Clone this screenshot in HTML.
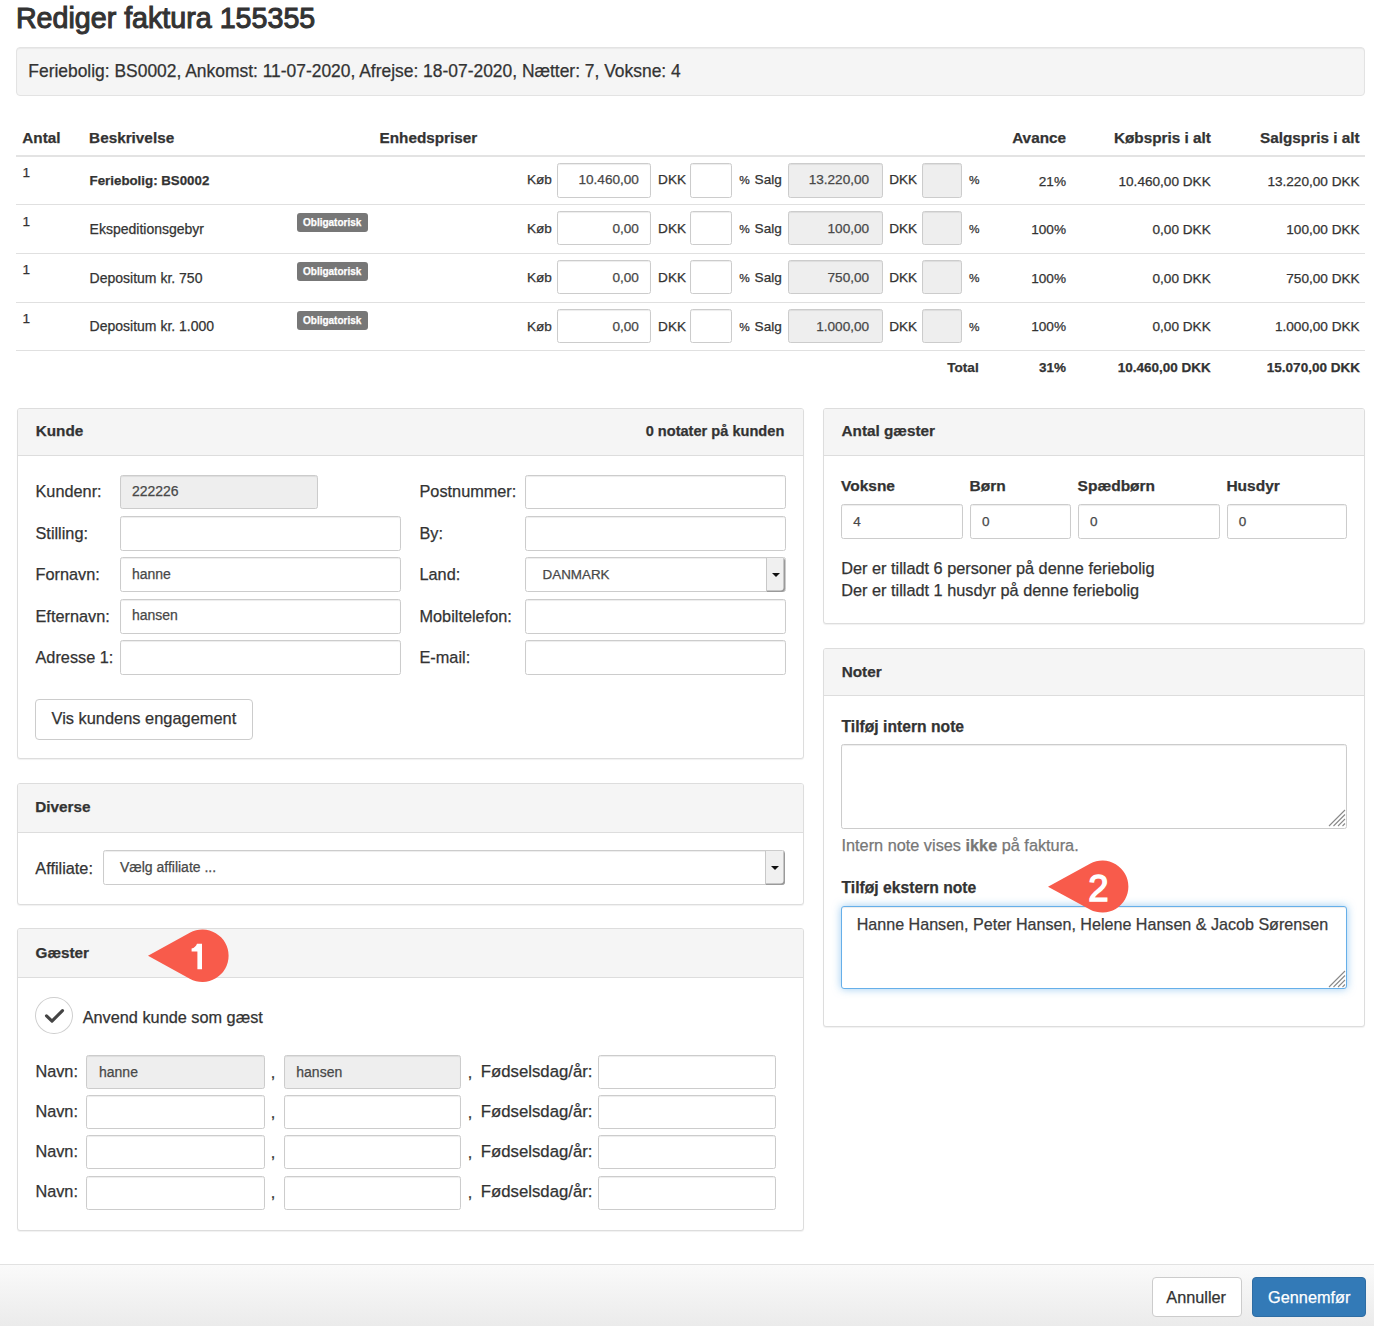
<!DOCTYPE html>
<html><head><meta charset="utf-8"><title>Rediger faktura</title>
<style>
html,body{margin:0;padding:0;background:#fff;}
body{width:1374px;height:1326px;position:relative;overflow:hidden;font-family:"Liberation Sans", sans-serif;}
.t{position:absolute;white-space:pre;line-height:1;-webkit-text-stroke:0.25px currentColor;}
.b{position:absolute;}
</style></head><body>
<div class="t" style="left:15.90px;top:4px;font-size:28.65px;color:#333;-webkit-text-stroke:1.05px #333;">Rediger faktura 155355</div>
<div class="b" style="left:16.00px;top:47.00px;width:1349.00px;height:48.50px;background:#f5f5f5;border:1px solid #e3e3e3;border-radius:4px;box-sizing:border-box;box-shadow:inset 0 1px 1px rgba(0,0,0,.05);"></div>
<div class="t" style="left:28.30px;top:63px;font-size:17.43px;color:#333;">Feriebolig: BS0002, Ankomst: 11-07-2020, Afrejse: 18-07-2020, Nætter: 7, Voksne: 4</div>
<div class="t" style="left:22.30px;top:130px;font-size:15.3px;font-weight:bold;color:#333;">Antal</div>
<div class="t" style="left:89.10px;top:130px;font-size:15.3px;font-weight:bold;color:#333;">Beskrivelse</div>
<div class="t" style="left:379.50px;top:130px;font-size:15.3px;font-weight:bold;color:#333;">Enhedspriser</div>
<div class="t" style="right:308.00px;top:130px;font-size:15.3px;font-weight:bold;color:#333;">Avance</div>
<div class="t" style="right:163.20px;top:130px;font-size:15.3px;font-weight:bold;color:#333;">Købspris i alt</div>
<div class="t" style="right:14.50px;top:130px;font-size:15.3px;font-weight:bold;color:#333;">Salgspris i alt</div>
<div class="b" style="left:16.00px;top:154.80px;width:1349.00px;height:2.00px;background:#e3e3e3;"></div>
<div class="t" style="left:22.60px;top:166px;font-size:13.6px;color:#333;">1</div>
<div class="t" style="left:89.60px;top:174px;font-size:13.3px;font-weight:bold;color:#333;">Feriebolig: BS0002</div>
<div class="t" style="left:527.00px;top:173px;font-size:13.6px;color:#333;">Køb</div>
<div class="b" style="left:557.30px;top:163.00px;width:94.00px;height:34.50px;background:#fff;border:1px solid #ccc;border-radius:2.5px;box-sizing:border-box;box-shadow:inset 0 1px 1px rgba(0,0,0,.075);"></div>
<div class="t" style="right:735.10px;top:173px;font-size:13.6px;color:#484848;">10.460,00</div>
<div class="t" style="left:658.10px;top:173px;font-size:13.6px;color:#333;">DKK</div>
<div class="b" style="left:690.40px;top:163.00px;width:41.90px;height:34.50px;background:#fff;border:1px solid #ccc;border-radius:2.5px;box-sizing:border-box;box-shadow:inset 0 1px 1px rgba(0,0,0,.075);"></div>
<div class="t" style="left:739.20px;top:175px;font-size:11.8px;color:#333;">%</div>
<div class="t" style="left:754.60px;top:173px;font-size:13.6px;color:#333;">Salg</div>
<div class="b" style="left:788.40px;top:163.00px;width:94.30px;height:34.50px;background:#eee;border:1px solid #ccc;border-radius:2.5px;box-sizing:border-box;box-shadow:inset 0 1px 1px rgba(0,0,0,.075);"></div>
<div class="t" style="right:504.90px;top:173px;font-size:13.6px;color:#484848;">13.220,00</div>
<div class="t" style="left:889.20px;top:173px;font-size:13.6px;color:#333;">DKK</div>
<div class="b" style="left:922.20px;top:163.00px;width:40.10px;height:34.50px;background:#eee;border:1px solid #ccc;border-radius:2.5px;box-sizing:border-box;box-shadow:inset 0 1px 1px rgba(0,0,0,.075);"></div>
<div class="t" style="left:969.10px;top:175px;font-size:11.8px;color:#333;">%</div>
<div class="t" style="right:308.00px;top:175px;font-size:13.6px;color:#333;">21%</div>
<div class="t" style="right:163.30px;top:175px;font-size:13.6px;color:#333;">10.460,00 DKK</div>
<div class="t" style="right:14.40px;top:175px;font-size:13.6px;color:#333;">13.220,00 DKK</div>
<div class="b" style="left:16.00px;top:203.90px;width:1349.00px;height:1.00px;background:#e0e0e0;"></div>
<div class="t" style="left:22.60px;top:215px;font-size:13.6px;color:#333;">1</div>
<div class="t" style="left:89.60px;top:222px;font-size:14px;color:#333;">Ekspeditionsgebyr</div>
<div class="b" style="left:296.60px;top:213.20px;width:71.20px;height:18.50px;background:#777;border-radius:3px;"></div>
<div class="t" style="left:132.20px;width:400px;text-align:center;top:218px;font-size:10px;font-weight:bold;color:#fff;">Obligatorisk</div>
<div class="t" style="left:527.00px;top:222px;font-size:13.6px;color:#333;">Køb</div>
<div class="b" style="left:557.30px;top:210.80px;width:94.00px;height:34.50px;background:#fff;border:1px solid #ccc;border-radius:2.5px;box-sizing:border-box;box-shadow:inset 0 1px 1px rgba(0,0,0,.075);"></div>
<div class="t" style="right:735.10px;top:222px;font-size:13.6px;color:#484848;">0,00</div>
<div class="t" style="left:658.10px;top:222px;font-size:13.6px;color:#333;">DKK</div>
<div class="b" style="left:690.40px;top:210.80px;width:41.90px;height:34.50px;background:#fff;border:1px solid #ccc;border-radius:2.5px;box-sizing:border-box;box-shadow:inset 0 1px 1px rgba(0,0,0,.075);"></div>
<div class="t" style="left:739.20px;top:224px;font-size:11.8px;color:#333;">%</div>
<div class="t" style="left:754.60px;top:222px;font-size:13.6px;color:#333;">Salg</div>
<div class="b" style="left:788.40px;top:210.80px;width:94.30px;height:34.50px;background:#eee;border:1px solid #ccc;border-radius:2.5px;box-sizing:border-box;box-shadow:inset 0 1px 1px rgba(0,0,0,.075);"></div>
<div class="t" style="right:504.90px;top:222px;font-size:13.6px;color:#484848;">100,00</div>
<div class="t" style="left:889.20px;top:222px;font-size:13.6px;color:#333;">DKK</div>
<div class="b" style="left:922.20px;top:210.80px;width:40.10px;height:34.50px;background:#eee;border:1px solid #ccc;border-radius:2.5px;box-sizing:border-box;box-shadow:inset 0 1px 1px rgba(0,0,0,.075);"></div>
<div class="t" style="left:969.10px;top:224px;font-size:11.8px;color:#333;">%</div>
<div class="t" style="right:308.00px;top:223px;font-size:13.6px;color:#333;">100%</div>
<div class="t" style="right:163.30px;top:223px;font-size:13.6px;color:#333;">0,00 DKK</div>
<div class="t" style="right:14.40px;top:223px;font-size:13.6px;color:#333;">100,00 DKK</div>
<div class="b" style="left:16.00px;top:253.00px;width:1349.00px;height:1.00px;background:#e0e0e0;"></div>
<div class="t" style="left:22.60px;top:263px;font-size:13.6px;color:#333;">1</div>
<div class="t" style="left:89.60px;top:271px;font-size:14px;color:#333;">Depositum kr. 750</div>
<div class="b" style="left:296.60px;top:262.20px;width:71.20px;height:18.50px;background:#777;border-radius:3px;"></div>
<div class="t" style="left:132.20px;width:400px;text-align:center;top:267px;font-size:10px;font-weight:bold;color:#fff;">Obligatorisk</div>
<div class="t" style="left:527.00px;top:271px;font-size:13.6px;color:#333;">Køb</div>
<div class="b" style="left:557.30px;top:259.80px;width:94.00px;height:34.50px;background:#fff;border:1px solid #ccc;border-radius:2.5px;box-sizing:border-box;box-shadow:inset 0 1px 1px rgba(0,0,0,.075);"></div>
<div class="t" style="right:735.10px;top:271px;font-size:13.6px;color:#484848;">0,00</div>
<div class="t" style="left:658.10px;top:271px;font-size:13.6px;color:#333;">DKK</div>
<div class="b" style="left:690.40px;top:259.80px;width:41.90px;height:34.50px;background:#fff;border:1px solid #ccc;border-radius:2.5px;box-sizing:border-box;box-shadow:inset 0 1px 1px rgba(0,0,0,.075);"></div>
<div class="t" style="left:739.20px;top:273px;font-size:11.8px;color:#333;">%</div>
<div class="t" style="left:754.60px;top:271px;font-size:13.6px;color:#333;">Salg</div>
<div class="b" style="left:788.40px;top:259.80px;width:94.30px;height:34.50px;background:#eee;border:1px solid #ccc;border-radius:2.5px;box-sizing:border-box;box-shadow:inset 0 1px 1px rgba(0,0,0,.075);"></div>
<div class="t" style="right:504.90px;top:271px;font-size:13.6px;color:#484848;">750,00</div>
<div class="t" style="left:889.20px;top:271px;font-size:13.6px;color:#333;">DKK</div>
<div class="b" style="left:922.20px;top:259.80px;width:40.10px;height:34.50px;background:#eee;border:1px solid #ccc;border-radius:2.5px;box-sizing:border-box;box-shadow:inset 0 1px 1px rgba(0,0,0,.075);"></div>
<div class="t" style="left:969.10px;top:273px;font-size:11.8px;color:#333;">%</div>
<div class="t" style="right:308.00px;top:272px;font-size:13.6px;color:#333;">100%</div>
<div class="t" style="right:163.30px;top:272px;font-size:13.6px;color:#333;">0,00 DKK</div>
<div class="t" style="right:14.40px;top:272px;font-size:13.6px;color:#333;">750,00 DKK</div>
<div class="b" style="left:16.00px;top:301.90px;width:1349.00px;height:1.00px;background:#e0e0e0;"></div>
<div class="t" style="left:22.60px;top:312px;font-size:13.6px;color:#333;">1</div>
<div class="t" style="left:89.60px;top:319px;font-size:14px;color:#333;">Depositum kr. 1.000</div>
<div class="b" style="left:296.60px;top:311.20px;width:71.20px;height:18.50px;background:#777;border-radius:3px;"></div>
<div class="t" style="left:132.20px;width:400px;text-align:center;top:316px;font-size:10px;font-weight:bold;color:#fff;">Obligatorisk</div>
<div class="t" style="left:527.00px;top:320px;font-size:13.6px;color:#333;">Køb</div>
<div class="b" style="left:557.30px;top:308.80px;width:94.00px;height:34.50px;background:#fff;border:1px solid #ccc;border-radius:2.5px;box-sizing:border-box;box-shadow:inset 0 1px 1px rgba(0,0,0,.075);"></div>
<div class="t" style="right:735.10px;top:320px;font-size:13.6px;color:#484848;">0,00</div>
<div class="t" style="left:658.10px;top:320px;font-size:13.6px;color:#333;">DKK</div>
<div class="b" style="left:690.40px;top:308.80px;width:41.90px;height:34.50px;background:#fff;border:1px solid #ccc;border-radius:2.5px;box-sizing:border-box;box-shadow:inset 0 1px 1px rgba(0,0,0,.075);"></div>
<div class="t" style="left:739.20px;top:322px;font-size:11.8px;color:#333;">%</div>
<div class="t" style="left:754.60px;top:320px;font-size:13.6px;color:#333;">Salg</div>
<div class="b" style="left:788.40px;top:308.80px;width:94.30px;height:34.50px;background:#eee;border:1px solid #ccc;border-radius:2.5px;box-sizing:border-box;box-shadow:inset 0 1px 1px rgba(0,0,0,.075);"></div>
<div class="t" style="right:504.90px;top:320px;font-size:13.6px;color:#484848;">1.000,00</div>
<div class="t" style="left:889.20px;top:320px;font-size:13.6px;color:#333;">DKK</div>
<div class="b" style="left:922.20px;top:308.80px;width:40.10px;height:34.50px;background:#eee;border:1px solid #ccc;border-radius:2.5px;box-sizing:border-box;box-shadow:inset 0 1px 1px rgba(0,0,0,.075);"></div>
<div class="t" style="left:969.10px;top:322px;font-size:11.8px;color:#333;">%</div>
<div class="t" style="right:308.00px;top:320px;font-size:13.6px;color:#333;">100%</div>
<div class="t" style="right:163.30px;top:320px;font-size:13.6px;color:#333;">0,00 DKK</div>
<div class="t" style="right:14.40px;top:320px;font-size:13.6px;color:#333;">1.000,00 DKK</div>
<div class="b" style="left:16.00px;top:349.50px;width:1349.00px;height:1.00px;background:#e0e0e0;"></div>
<div class="t" style="right:395.30px;top:361px;font-size:13.6px;font-weight:bold;color:#333;">Total</div>
<div class="t" style="right:308.00px;top:361px;font-size:13.5px;font-weight:bold;color:#333;">31%</div>
<div class="t" style="right:163.20px;top:361px;font-size:13.5px;font-weight:bold;color:#333;">10.460,00 DKK</div>
<div class="t" style="right:14.10px;top:361px;font-size:13.5px;font-weight:bold;color:#333;">15.070,00 DKK</div>
<div class="b" style="left:16.50px;top:408.00px;width:787.50px;height:350.50px;background:#fff;border:1px solid #ddd;border-radius:3px;box-sizing:border-box;box-shadow:0 1px 1px rgba(0,0,0,.06);"></div>
<div class="b" style="left:17.50px;top:409.00px;width:785.50px;height:47.00px;background:#f5f5f5;border-radius:2px 2px 0 0;"></div>
<div class="b" style="left:17.50px;top:455.00px;width:785.50px;height:1.00px;background:#ddd;"></div>
<div class="t" style="left:35.70px;top:423px;font-size:15.3px;font-weight:bold;color:#333;">Kunde</div>
<div class="t" style="right:589.70px;top:424px;font-size:14.6px;font-weight:bold;color:#333;">0 notater på kunden</div>
<div class="t" style="left:35.50px;top:483px;font-size:16.3px;color:#333;">Kundenr:</div>
<div class="b" style="left:120.00px;top:474.90px;width:197.50px;height:34.50px;background:#eee;border:1px solid #ccc;border-radius:2.5px;box-sizing:border-box;box-shadow:inset 0 1px 1px rgba(0,0,0,.075);"></div>
<div class="t" style="left:131.90px;top:484px;font-size:14px;color:#484848;">222226</div>
<div class="t" style="left:419.50px;top:483px;font-size:16.3px;color:#333;">Postnummer:</div>
<div class="b" style="left:525.30px;top:474.90px;width:260.50px;height:34.50px;background:#fff;border:1px solid #ccc;border-radius:2.5px;box-sizing:border-box;box-shadow:inset 0 1px 1px rgba(0,0,0,.075);"></div>
<div class="t" style="left:35.50px;top:525px;font-size:16.3px;color:#333;">Stilling:</div>
<div class="b" style="left:120.00px;top:516.20px;width:280.50px;height:34.50px;background:#fff;border:1px solid #ccc;border-radius:2.5px;box-sizing:border-box;box-shadow:inset 0 1px 1px rgba(0,0,0,.075);"></div>
<div class="t" style="left:419.50px;top:525px;font-size:16.3px;color:#333;">By:</div>
<div class="b" style="left:525.30px;top:516.20px;width:260.50px;height:34.50px;background:#fff;border:1px solid #ccc;border-radius:2.5px;box-sizing:border-box;box-shadow:inset 0 1px 1px rgba(0,0,0,.075);"></div>
<div class="t" style="left:35.50px;top:566px;font-size:16.3px;color:#333;">Fornavn:</div>
<div class="b" style="left:120.00px;top:557.40px;width:280.50px;height:34.50px;background:#fff;border:1px solid #ccc;border-radius:2.5px;box-sizing:border-box;box-shadow:inset 0 1px 1px rgba(0,0,0,.075);"></div>
<div class="t" style="left:131.90px;top:567px;font-size:14px;color:#484848;">hanne</div>
<div class="t" style="left:419.50px;top:566px;font-size:16.3px;color:#333;">Land:</div>
<div class="b" style="left:525.30px;top:557.40px;width:260.50px;height:34.50px;background:#fff;border:1px solid #ccc;border-radius:2.5px;box-sizing:border-box;box-shadow:inset 0 1px 1px rgba(0,0,0,.075);"></div>
<div class="b" style="left:765.60px;top:558.40px;width:19.70px;height:33.20px;background:#f0f0f0;border-left:1px solid #c8c8c8;box-sizing:border-box;border-radius:0 3px 3px 0;box-shadow:inset -1.5px -1.5px 0 #9a9a9a;"></div>
<div class="b" style="left:771.50px;top:573.25px;width:0;height:0;border-left:4.3px solid transparent;border-right:4.3px solid transparent;border-top:4.6px solid #111;"></div>
<div class="t" style="left:542.60px;top:568px;font-size:13.4px;color:#484848;">DANMARK</div>
<div class="t" style="left:35.50px;top:608px;font-size:16.3px;color:#333;">Efternavn:</div>
<div class="b" style="left:120.00px;top:599.20px;width:280.50px;height:34.50px;background:#fff;border:1px solid #ccc;border-radius:2.5px;box-sizing:border-box;box-shadow:inset 0 1px 1px rgba(0,0,0,.075);"></div>
<div class="t" style="left:131.90px;top:608px;font-size:14px;color:#484848;">hansen</div>
<div class="t" style="left:419.50px;top:608px;font-size:16.3px;color:#333;">Mobiltelefon:</div>
<div class="b" style="left:525.30px;top:599.20px;width:260.50px;height:34.50px;background:#fff;border:1px solid #ccc;border-radius:2.5px;box-sizing:border-box;box-shadow:inset 0 1px 1px rgba(0,0,0,.075);"></div>
<div class="t" style="left:35.50px;top:649px;font-size:16.3px;color:#333;">Adresse 1:</div>
<div class="b" style="left:120.00px;top:640.30px;width:280.50px;height:34.50px;background:#fff;border:1px solid #ccc;border-radius:2.5px;box-sizing:border-box;box-shadow:inset 0 1px 1px rgba(0,0,0,.075);"></div>
<div class="t" style="left:419.50px;top:649px;font-size:16.3px;color:#333;">E-mail:</div>
<div class="b" style="left:525.30px;top:640.30px;width:260.50px;height:34.50px;background:#fff;border:1px solid #ccc;border-radius:2.5px;box-sizing:border-box;box-shadow:inset 0 1px 1px rgba(0,0,0,.075);"></div>
<div class="b" style="left:35.20px;top:699.40px;width:217.80px;height:40.50px;background:#fff;border:1px solid #ccc;border-radius:4px;box-sizing:border-box;"></div>
<div class="t" style="left:51.50px;top:710px;font-size:16.4px;color:#333;">Vis kundens engagement</div>
<div class="b" style="left:16.50px;top:782.80px;width:787.50px;height:122.50px;background:#fff;border:1px solid #ddd;border-radius:3px;box-sizing:border-box;box-shadow:0 1px 1px rgba(0,0,0,.06);"></div>
<div class="b" style="left:17.50px;top:783.80px;width:785.50px;height:48.70px;background:#f5f5f5;border-radius:2px 2px 0 0;"></div>
<div class="b" style="left:17.50px;top:831.50px;width:785.50px;height:1.00px;background:#ddd;"></div>
<div class="t" style="left:35.30px;top:799px;font-size:15.3px;font-weight:bold;color:#333;">Diverse</div>
<div class="t" style="left:35.30px;top:860px;font-size:16.3px;color:#333;">Affiliate:</div>
<div class="b" style="left:102.80px;top:849.70px;width:682.40px;height:35.30px;background:#fff;border:1px solid #ccc;border-radius:2.5px;box-sizing:border-box;box-shadow:inset 0 1px 1px rgba(0,0,0,.075);"></div>
<div class="b" style="left:765.00px;top:850.70px;width:19.70px;height:34.00px;background:#f0f0f0;border-left:1px solid #c8c8c8;box-sizing:border-box;border-radius:0 3px 3px 0;box-shadow:inset -1.5px -1.5px 0 #9a9a9a;"></div>
<div class="b" style="left:770.90px;top:865.95px;width:0;height:0;border-left:4.3px solid transparent;border-right:4.3px solid transparent;border-top:4.6px solid #111;"></div>
<div class="t" style="left:119.90px;top:860px;font-size:14px;color:#484848;">Vælg affiliate ...</div>
<div class="b" style="left:16.50px;top:928.40px;width:787.50px;height:302.60px;background:#fff;border:1px solid #ddd;border-radius:3px;box-sizing:border-box;box-shadow:0 1px 1px rgba(0,0,0,.06);"></div>
<div class="b" style="left:17.50px;top:929.40px;width:785.50px;height:48.10px;background:#f5f5f5;border-radius:2px 2px 0 0;"></div>
<div class="b" style="left:17.50px;top:976.50px;width:785.50px;height:1.00px;background:#ddd;"></div>
<div class="t" style="left:35.50px;top:945px;font-size:15.3px;font-weight:bold;color:#333;">Gæster</div>
<div class="b" style="left:35.20px;top:996.60px;width:37.40px;height:37.00px;background:#fff;border:1.3px solid #cfcfcf;border-radius:50%;box-sizing:border-box;"></div>
<svg class="b" style="left:35px;top:996px" width="38" height="38" viewBox="35 996 38 38"><path d="M46.5 1015.8 L52 1021.1 L62.5 1010.6" fill="none" stroke="#444" stroke-width="3.1" stroke-linecap="round" stroke-linejoin="round"/></svg>
<div class="t" style="left:82.70px;top:1009px;font-size:16.3px;color:#333;">Anvend kunde som gæst</div>
<div class="t" style="left:35.40px;top:1063px;font-size:16.3px;color:#333;">Navn:</div>
<div class="b" style="left:86.20px;top:1055.40px;width:178.60px;height:34.00px;background:#eee;border:1px solid #ccc;border-radius:2.5px;box-sizing:border-box;box-shadow:inset 0 1px 1px rgba(0,0,0,.075);"></div>
<div class="t" style="left:270.80px;top:1064px;font-size:16.3px;color:#333;">,</div>
<div class="b" style="left:283.50px;top:1055.40px;width:177.90px;height:34.00px;background:#eee;border:1px solid #ccc;border-radius:2.5px;box-sizing:border-box;box-shadow:inset 0 1px 1px rgba(0,0,0,.075);"></div>
<div class="t" style="left:467.80px;top:1064px;font-size:16.3px;color:#333;">,</div>
<div class="t" style="left:480.80px;top:1064px;font-size:16.75px;color:#333;">Fødselsdag/år:</div>
<div class="b" style="left:598.00px;top:1055.40px;width:177.80px;height:34.00px;background:#fff;border:1px solid #ccc;border-radius:2.5px;box-sizing:border-box;box-shadow:inset 0 1px 1px rgba(0,0,0,.075);"></div>
<div class="t" style="left:99.00px;top:1065px;font-size:14px;color:#484848;">hanne</div>
<div class="t" style="left:296.30px;top:1065px;font-size:14px;color:#484848;">hansen</div>
<div class="t" style="left:35.40px;top:1103px;font-size:16.3px;color:#333;">Navn:</div>
<div class="b" style="left:86.20px;top:1095.10px;width:178.60px;height:34.00px;background:#fff;border:1px solid #ccc;border-radius:2.5px;box-sizing:border-box;box-shadow:inset 0 1px 1px rgba(0,0,0,.075);"></div>
<div class="t" style="left:270.80px;top:1104px;font-size:16.3px;color:#333;">,</div>
<div class="b" style="left:283.50px;top:1095.10px;width:177.90px;height:34.00px;background:#fff;border:1px solid #ccc;border-radius:2.5px;box-sizing:border-box;box-shadow:inset 0 1px 1px rgba(0,0,0,.075);"></div>
<div class="t" style="left:467.80px;top:1104px;font-size:16.3px;color:#333;">,</div>
<div class="t" style="left:480.80px;top:1104px;font-size:16.75px;color:#333;">Fødselsdag/år:</div>
<div class="b" style="left:598.00px;top:1095.10px;width:177.80px;height:34.00px;background:#fff;border:1px solid #ccc;border-radius:2.5px;box-sizing:border-box;box-shadow:inset 0 1px 1px rgba(0,0,0,.075);"></div>
<div class="t" style="left:35.40px;top:1143px;font-size:16.3px;color:#333;">Navn:</div>
<div class="b" style="left:86.20px;top:1135.00px;width:178.60px;height:34.00px;background:#fff;border:1px solid #ccc;border-radius:2.5px;box-sizing:border-box;box-shadow:inset 0 1px 1px rgba(0,0,0,.075);"></div>
<div class="t" style="left:270.80px;top:1144px;font-size:16.3px;color:#333;">,</div>
<div class="b" style="left:283.50px;top:1135.00px;width:177.90px;height:34.00px;background:#fff;border:1px solid #ccc;border-radius:2.5px;box-sizing:border-box;box-shadow:inset 0 1px 1px rgba(0,0,0,.075);"></div>
<div class="t" style="left:467.80px;top:1144px;font-size:16.3px;color:#333;">,</div>
<div class="t" style="left:480.80px;top:1144px;font-size:16.75px;color:#333;">Fødselsdag/år:</div>
<div class="b" style="left:598.00px;top:1135.00px;width:177.80px;height:34.00px;background:#fff;border:1px solid #ccc;border-radius:2.5px;box-sizing:border-box;box-shadow:inset 0 1px 1px rgba(0,0,0,.075);"></div>
<div class="t" style="left:35.40px;top:1183px;font-size:16.3px;color:#333;">Navn:</div>
<div class="b" style="left:86.20px;top:1175.60px;width:178.60px;height:34.00px;background:#fff;border:1px solid #ccc;border-radius:2.5px;box-sizing:border-box;box-shadow:inset 0 1px 1px rgba(0,0,0,.075);"></div>
<div class="t" style="left:270.80px;top:1184px;font-size:16.3px;color:#333;">,</div>
<div class="b" style="left:283.50px;top:1175.60px;width:177.90px;height:34.00px;background:#fff;border:1px solid #ccc;border-radius:2.5px;box-sizing:border-box;box-shadow:inset 0 1px 1px rgba(0,0,0,.075);"></div>
<div class="t" style="left:467.80px;top:1184px;font-size:16.3px;color:#333;">,</div>
<div class="t" style="left:480.80px;top:1184px;font-size:16.75px;color:#333;">Fødselsdag/år:</div>
<div class="b" style="left:598.00px;top:1175.60px;width:177.80px;height:34.00px;background:#fff;border:1px solid #ccc;border-radius:2.5px;box-sizing:border-box;box-shadow:inset 0 1px 1px rgba(0,0,0,.075);"></div>
<div class="b" style="left:822.80px;top:408.00px;width:542.70px;height:216.00px;background:#fff;border:1px solid #ddd;border-radius:3px;box-sizing:border-box;box-shadow:0 1px 1px rgba(0,0,0,.06);"></div>
<div class="b" style="left:823.80px;top:409.00px;width:540.70px;height:47.00px;background:#f5f5f5;border-radius:2px 2px 0 0;"></div>
<div class="b" style="left:823.80px;top:455.00px;width:540.70px;height:1.00px;background:#ddd;"></div>
<div class="t" style="left:841.50px;top:423px;font-size:15.3px;font-weight:bold;color:#333;">Antal gæster</div>
<div class="t" style="left:841.00px;top:478px;font-size:15.5px;font-weight:bold;color:#333;">Voksne</div>
<div class="b" style="left:841.20px;top:504.00px;width:122.10px;height:35.30px;background:#fff;border:1px solid #ccc;border-radius:2.5px;box-sizing:border-box;box-shadow:inset 0 1px 1px rgba(0,0,0,.075);"></div>
<div class="t" style="left:853.30px;top:515px;font-size:13.5px;color:#484848;">4</div>
<div class="t" style="left:969.60px;top:478px;font-size:15.5px;font-weight:bold;color:#333;">Børn</div>
<div class="b" style="left:969.80px;top:504.00px;width:101.00px;height:35.30px;background:#fff;border:1px solid #ccc;border-radius:2.5px;box-sizing:border-box;box-shadow:inset 0 1px 1px rgba(0,0,0,.075);"></div>
<div class="t" style="left:981.90px;top:515px;font-size:13.5px;color:#484848;">0</div>
<div class="t" style="left:1077.60px;top:478px;font-size:15.5px;font-weight:bold;color:#333;">Spædbørn</div>
<div class="b" style="left:1077.80px;top:504.00px;width:142.50px;height:35.30px;background:#fff;border:1px solid #ccc;border-radius:2.5px;box-sizing:border-box;box-shadow:inset 0 1px 1px rgba(0,0,0,.075);"></div>
<div class="t" style="left:1089.90px;top:515px;font-size:13.5px;color:#484848;">0</div>
<div class="t" style="left:1226.40px;top:478px;font-size:15.5px;font-weight:bold;color:#333;">Husdyr</div>
<div class="b" style="left:1226.60px;top:504.00px;width:120.70px;height:35.30px;background:#fff;border:1px solid #ccc;border-radius:2.5px;box-sizing:border-box;box-shadow:inset 0 1px 1px rgba(0,0,0,.075);"></div>
<div class="t" style="left:1238.70px;top:515px;font-size:13.5px;color:#484848;">0</div>
<div class="t" style="left:841.30px;top:560px;font-size:16.3px;color:#333;">Der er tilladt 6 personer på denne feriebolig</div>
<div class="t" style="left:841.30px;top:582px;font-size:16.3px;color:#333;">Der er tilladt 1 husdyr på denne feriebolig</div>
<div class="b" style="left:822.80px;top:648.10px;width:542.70px;height:379.10px;background:#fff;border:1px solid #ddd;border-radius:3px;box-sizing:border-box;box-shadow:0 1px 1px rgba(0,0,0,.06);"></div>
<div class="b" style="left:823.80px;top:649.10px;width:540.70px;height:46.90px;background:#f5f5f5;border-radius:2px 2px 0 0;"></div>
<div class="b" style="left:823.80px;top:695.00px;width:540.70px;height:1.00px;background:#ddd;"></div>
<div class="t" style="left:841.70px;top:664px;font-size:15.3px;font-weight:bold;color:#333;">Noter</div>
<div class="t" style="left:841.50px;top:719px;font-size:15.7px;font-weight:bold;color:#333;">Tilføj intern note</div>
<div class="b" style="left:841.10px;top:744.20px;width:506.20px;height:84.60px;background:#fff;border:1px solid #ccc;border-radius:2.5px;box-sizing:border-box;box-shadow:inset 0 1px 1px rgba(0,0,0,.075);"></div>
<svg class="b" style="left:1327.6px;top:809.2px" width="18" height="18" viewBox="1327.6 809.2 18 18"><path d="M1328.6 826.2 L1344.6 810.2 M1333.1 826.2 L1344.6 814.7 M1337.6 826.2 L1344.6 819.2 M1342.1 826.2 L1344.6 823.7" stroke="#8a8a8a" stroke-width="1.1" fill="none"/></svg>
<div class="t" style="left:841.50px;top:837px;font-size:16.3px;color:#777;">Intern note vises <b>ikke</b> på faktura.</div>
<div class="t" style="left:841.50px;top:880px;font-size:15.7px;font-weight:bold;color:#333;">Tilføj ekstern note</div>
<div class="b" style="left:841.10px;top:906.30px;width:506.20px;height:83.20px;background:#fff;border:1px solid #66afe9;border-radius:3px;box-sizing:border-box;box-shadow:inset 0 1px 1px rgba(0,0,0,.075),0 0 8px rgba(102,175,233,.65);"></div>
<svg class="b" style="left:1327.6px;top:969.8px" width="18" height="18" viewBox="1327.6 969.8 18 18"><path d="M1328.6 986.8 L1344.6 970.8 M1333.1 986.8 L1344.6 975.3 M1337.6 986.8 L1344.6 979.8 M1342.1 986.8 L1344.6 984.3" stroke="#8a8a8a" stroke-width="1.1" fill="none"/></svg>
<div class="t" style="left:856.70px;top:916px;font-size:16.1px;color:#3a3a3a;">Hanne Hansen, Peter Hansen, Helene Hansen &amp; Jacob Sørensen</div>
<svg class="b" style="left:0;top:0" width="1374" height="1326" viewBox="0 0 1374 1326"><path d="M148 955.7 L189.78 932.74 A26.2 26.2 0 1 1 189.78 978.66 Z" fill="#f85b4b"/></svg>
<svg class="b" style="left:0;top:0" width="1374" height="1326"><path d="M197.4 943.8 L202 943.8 L202 969.2 L197.4 969.2 L197.4 951.6 L191.6 951.6 L191.6 948.6 Q195.6 947.6 197 943.8 Z" fill="#fff"/></svg>
<svg class="b" style="left:0;top:0" width="1374" height="1326" viewBox="0 0 1374 1326"><path d="M1048 886.8 L1089.97 863.76 A26 26 0 1 1 1089.97 909.44 Z" fill="#f85b4b"/></svg>
<div class="t" style="left:898.30px;width:400px;text-align:center;top:871px;font-size:36.5px;color:#fff;-webkit-text-stroke:1.4px #fff;">2</div>
<div class="b" style="left:0.00px;top:1263.50px;width:1374.00px;height:62.50px;background:linear-gradient(#fafafa,#ebebeb);border-top:1px solid #e2e2e2;box-sizing:border-box;"></div>
<div class="b" style="left:1152.30px;top:1277.10px;width:90.00px;height:40.10px;background:#fff;border:1px solid #ccc;border-radius:4px;box-sizing:border-box;"></div>
<div class="t" style="left:1166.30px;top:1289px;font-size:16.3px;color:#333;">Annuller</div>
<div class="b" style="left:1252.30px;top:1277.10px;width:113.50px;height:40.10px;background:#337ab7;border:1px solid #2e6da4;border-radius:4px;box-sizing:border-box;"></div>
<div class="t" style="left:1268.10px;top:1289px;font-size:16.3px;color:#fff;">Gennemfør</div>
</body></html>
